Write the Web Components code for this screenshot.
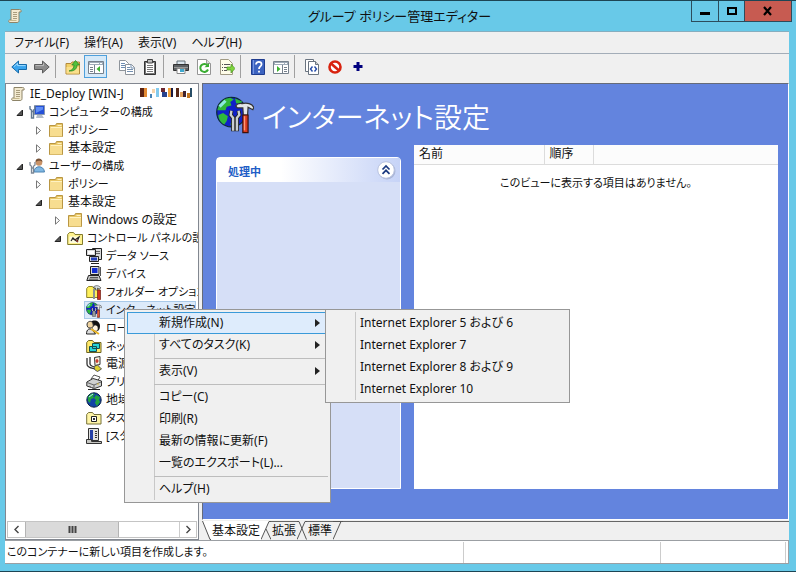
<!DOCTYPE html>
<html lang="ja">
<head>
<meta charset="utf-8">
<title>グループ ポリシー管理エディター</title>
<style>
html, body { margin: 0; height: 100%; }
body {
  font: 12px/18px "Noto Sans", "Noto Sans CJK JP", sans-serif;
  font-feature-settings: "palt";
  color: #111; overflow: hidden; background: #68c9e8;
}
</style>
</head>
<body>
<app-window></app-window>
<script>
const icons = {
scroll: `<path d="M4 1.5h8.5c1.5 0 2 1 1.500 2.500H12v8.500c0 1.500-.8 2-2 2H3c-1.500 0-2-2-.5-2.500H4z" fill="#f3ead0" stroke="#8d8468"/><path d="M6 4.500h4M6 6.500h4M6 8.500h4M6 10.500h4" stroke="#a99d7d"/><path d="M3 12.500h6.500" stroke="#c5b88d"/>`,
back: `<path d="M.8 8 7.500 2v3.500h8v5h-8V14z" fill="#3aa5ee" stroke="#176aa8"/><path d="M3 7.600 6.600 4.400v2.200h8" stroke="#9fdcff" fill="none"/>`,
forward: `<path d="M15.200 8 8.500 2v3.500h-8v5h8V14z" fill="#8b8b8b" stroke="#5c5c5c"/><path d="M1.500 6.600h8V4.300" stroke="#bbb" fill="none"/>`,
up: `<path d="M1 4.500h5l1-1.500h7.500v12H1z" fill="#f2d067" stroke="#b3893a"/><path d="M1.500 8h12.500v6.500H1.500z" fill="#f9df8b"/><path d="M4 12c3.500-1 5-3 5-6H6.800L10.500 1.500 14.500 6H12c0 4-3 6.500-8 6z" fill="#53c13c" stroke="#23811d" stroke-width=".7"/>`,
pane: `<path d="M.5 2.500h15v12H.5z" fill="#fff" stroke="#76818d"/><path d="M1 3h14v3H1z" fill="#9eabb8"/><path d="M2 4.500h9M12 4.500h2" stroke="#fff"/><path d="M6.500 6v8M2 8.500h3M2 10.500h3M2 12.500h3" stroke="#75808c"/><path d="M12 7v6L8.500 10z" fill="#3bb32e"/>`,
pane2: `<path d="M.5 2.500h15v12H.5z" fill="#fff" stroke="#76818d"/><path d="M1 3h14v3H1z" fill="#9eabb8"/><path d="M2 4.500h9M12 4.500h2" stroke="#fff"/><path d="M9.500 6v8M11 8.500h3M11 10.500h3M11 12.500h3" stroke="#75808c"/><path d="M4 7v6l3.500-3z" fill="#3bb32e"/>`,
copy: `<path d="M.5 1.500h6l3 3v7h-9z" fill="#fff" stroke="#8e949b"/><path d="M2 4.500h4M2 6.500h5M2 8.500h4" stroke="#6d8db3"/><path d="M6.500 5.500h6l3 3v7h-9z" fill="#fff" stroke="#8e949b"/><path d="M12 5.500v3.500h3.500M8 8.500h3M8 10.500h6M8 12.500h6" fill="none" stroke="#7590b0"/>`,
clip: `<path d="M2.500 2.500h11v13h-11z" fill="#777" stroke="#333"/><path d="M4 4h8v10H4z" fill="#fff"/><path d="M5.500.5h5V4h-5z" fill="#bbb" stroke="#444"/><path d="M5 6.500h6M5 8.500h6M5 10.500h6M5 12.500h6" stroke="#777"/>`,
print: `<path d="M4 2h8v4H4z" fill="#dbe6ee" stroke="#657079"/><path d="M.5 5.500h15v6H.5z" fill="#5d6164" stroke="#333"/><path d="M1 8.500h14" stroke="#999"/><path d="M4 9.500h8v5H4z" fill="#fff" stroke="#888"/><path d="M7 10h4v3H7z" fill="#3fa9cf"/>`,
refresh: `<path d="M1.500.5h9l4 4v11h-13z" fill="#fff" stroke="#959595"/><path d="M10.500.5v4h4" fill="#ddd" stroke="#999"/><path d="M11.500 6.500A4 4 0 1 0 12 10.500" fill="none" stroke="#3aad32" stroke-width="2"/><path d="M8.500 8.200 13 8V4z" fill="#3aad32"/>`,
exportlist: `<path d="M1.500.5h8l4 4v11h-12z" fill="#fffde9" stroke="#a09a83"/><path d="M3 5.500h1M3 8.500h1M3 11.500h1M5 5.500h6M5 8.500h3M5 11.500h3" stroke="#555"/><path d="M8 8h4V5l4 4.500-4 4.500v-3H8z" fill="#7ed43c" stroke="#4a9322" stroke-width=".7"/>`,
help: `<path d="M1.500.5h13v15h-13z" fill="#3c63c0" stroke="#1f3c8e"/><path d="M3.500 1v14" stroke="#7796e2"/><path d="M6 5.500C6 2 12 2 11.500 5.500 11.300 7.500 9 7.500 9 10M9 11.800v1.800" fill="none" stroke="#fff" stroke-width="1.800"/>`,
code: `<path d="M1.500.5h8v12h-8z" fill="#fff" stroke="#6a7480"/><path d="M4.500 2.500h7l3 3v10h-10z" fill="#fff" stroke="#6a7480"/><path d="M11.500 2.500v3h3" fill="#ccc" stroke="#6a7480"/><path d="m8.500 7.500-2 2.500 2 2.500M10.500 7.500l2 2.500-2 2.500" fill="none" stroke="#234aa8" stroke-width="1.400"/>`,
stop: `<circle cx="8" cy="8" r="5.500" fill="#fff" stroke="#d8230f" stroke-width="2.600"/><path d="m4 4.500 8 7" stroke="#d8230f" stroke-width="2.600"/>`,
plus: `<path d="M8 3v9M3.500 7.500h9" stroke="#00007e" stroke-width="3"/>`,
folder: `<path d="M1.500 3.500h6l1-2h6v13h-13z" fill="#e9c766" stroke="#b99643"/><path d="M2 5h12v9.500H2z" fill="#f7dd90"/><path d="M3 5.500h11M9.500 3.500h4" stroke="#fff2c2"/>`,
computer: `<path d="M5.500 1.500h10v9h-10z" fill="#2450d8" stroke="#8796b0"/><path d="M7 3h7v2.500L7 9z" fill="#5f8df4"/><path d="M8 11h5l2 3H7z" fill="#b2bcc9"/><path d="M1 2v3l1.500 1.200V14h2V6.200L6 5V2M2 7.500h3" fill="none" stroke="#64798f" stroke-width="1.400"/>`,
user: `<circle cx="10" cy="4.500" r="3.300" fill="#c89267"/><path d="M6.500 4c0-5 7-4 7 0-2-2-4-1.500-7 0z" fill="#755137"/><path d="M5 14c0-7 10-7 10.500 0z" fill="#80b8e3" stroke="#4d84b3"/><path d="M1 4v3l1.500 1.200V15h2V8.200L6 7V4M2 10h3" fill="none" stroke="#7c8896" stroke-width="1.300"/>`,
ctrl: `<path d="M.7 4.500 2.500 2.500h4l1.500 2h7.500v10H.7z" fill="#fff28e" stroke="#837b2b"/><path d="M2.500 6.500h10.500v6.500H2.500z" fill="#fffce0"/><path d="m4 11 2-3 2 2 4-3-2 5M5 8l6 4" fill="none" stroke="#222" stroke-width="1.200"/><path d="M9 9.500 11 12" stroke="#bb2a23"/>`,
data: `<path d="M6.500.5h9v11h-9z" fill="#d9d9d9" stroke="#222"/><path d="M8 3.500h6M8 5.500h6" stroke="#666"/><path d="M.5 1.500h9v6h-9z" fill="#dadada" stroke="#222"/><path d="M2 3h6v3H2z" fill="#fff"/><path d="M3.500 8.500h9v5h-9z" fill="#ddd" stroke="#222"/><path d="M5 9.500h6v3H5z" fill="#243fba"/><path d="M5 15.500h8" stroke="#222"/>`,
device: `<path d="M4.500.5h8.500v8H4.500z" fill="#ddd" stroke="#222"/><path d="M6 2h5.500v5H6z" fill="#112bd0"/><path d="M2.500 9.500H13l2 5H.8z" fill="#c7c7c7" stroke="#222"/><path d="M4 11.500h8M3 13.200h9" stroke="#555"/><path d="M14.500 1v9" stroke="#555"/>`,
folderopt: `<path d="M.7 4.500 2.500 2.500h4l1.500 2h5v9H.7z" fill="#fff05a" stroke="#8d822a"/><path d="M7 3.500c3-3 6-2 8 .5l-2 1-1.500-1V6H9.500V4z" fill="#d8dddf" stroke="#3f4547" stroke-width=".7"/><path d="M11.500 6h3v9.500h-3z" fill="#cf2f1f" stroke="#701d14" stroke-width=".7"/><path d="M8 5v10" stroke="#8b9195" stroke-width="2"/>`,
globe: `<circle cx="8" cy="8" r="7.200" fill="#1243a6" stroke="#092045"/><path d="M2 5c2-4 5-4 7-3l-2 2 1 2-3 1-1 4-2-2zM10 3l4 2-1 3 1 2-3 4-2-3 1-3-2-2z" fill="#22a43f"/><path d="m3 5 4-3" stroke="#b6f0ff"/>`,
globetools: `<circle cx="6.500" cy="6.800" r="6.200" fill="#1020c8" stroke="#0b2a35" stroke-width=".5"/><path d="M.6 6C1.200 2.500 3.500 1 6 .7L7.500 1.500 6 2.500 6.500 4 4.500 4.500 4 6 2 6zM1 8l2-.8 2 1.300-.5 2L3.500 12C2 11.200 1 9.700 1 8zM8 1l3 1.300-.8 1.200L8.500 3zM7 10l1.500 1-1 1.800L6 12z" fill="#2fb83a"/><path d="M1.500 4.500 4 2" stroke="#8de8e0" stroke-width="1.300"/><path d="M6.500 6.200 6.200 8l1 1.200v5.600M9.500 6.200 9.800 8l-1 1.200v5.600" fill="none" stroke="#222" stroke-width="1.700"/><path d="M6.500 6.200 6.200 8l1 1.200v5.400M9.500 6.200 9.800 8l-1 1.200v5.400" fill="none" stroke="#c9cdd0"/><path d="M8.300 4.200c.6-1 1.700-1.200 2.700-1 2-.5 4.200 0 4.900 1.600l-.4 1-2-1.100-.2 3.300h-1.800L11.300 5H9z" fill="#e2e6e8" stroke="#333" stroke-width=".5"/><path d="M11.300 8h2.200v7.400h-2.200z" fill="#d93a1f" stroke="#3e100a" stroke-width=".5"/><path d="M12 8.500v6" stroke="#ff9a78" stroke-width=".6"/>`,
users: `<path d="M5 2c3-3 9-1 9 4 0 4-2 6-5 5L6 8z" fill="#111"/><path d="M9 5c3 0 4 4 2 6-3 1-5-2-5-4z" fill="#fff4df" stroke="#333" stroke-width=".6"/><path d="M1 4c1-4 6-3 6 0 1 3-1 4-3 4S1 7 1 4z" fill="#efd3a0" stroke="#333"/><path d="M.5 14c0-5 3-6 6-4l3 4z" fill="#dedede" stroke="#222"/><path d="m5 9 8 5" stroke="#e8b323" stroke-width="2"/>`,
network: `<path d="M.7 4.500 2.500 2.500h4l1.500 2h7v10H.7z" fill="#ffe96a" stroke="#6e6523"/><path d="M6.500 5.500h7v5h-7zM3.500 8.500h7v5h-7z" fill="#27d4d7" stroke="#164c52"/>`,
power: `<path d="M8.500 1.500 14 .5v8l-5 1z" fill="#f5f0df" stroke="#333"/><path d="M11 3v4M9.500 5h3" stroke="#c72c20" stroke-width="1.300"/><path d="M1 2v6c0 4 5 4 8 5M4 1v7c0 2 4 3 6 3" fill="none" stroke="#333" stroke-width="1.300"/><path d="M8 10.500 11.500 9l4 4-4 2.500-3-2z" fill="#ddd22f" stroke="#555"/>`,
printer: `<path d="m5 5 3-4 6 2-3 5z" fill="#fff" stroke="#555"/><path d="M.8 8 7 4.500 15.500 7v5l-7 2.500L.8 12z" fill="#cfd1d1" stroke="#333"/><path d="m1 8.500 7 2.500 7-3M8 11v3.500M3 12l5 3" fill="none" stroke="#666"/><path d="M11 10h2" stroke="#dfbe39"/><path d="M2 15.500h12" stroke="#222"/>`,
task: `<path d="M.7 4.500 2.500 2.500h4l1.500 2h7v9.500H.7z" fill="#fff5a6" stroke="#777139"/><path d="M5.500 6.500h5v5h-5z" fill="#fff" stroke="#222"/><path d="M7 8h2v2H7z" fill="#333"/>`,
start: `<path d="M2.500.5h10v12h-10z" fill="#e2e2df" stroke="#333"/><path d="M4 2h3v10H4z" fill="#2540a7"/><path d="M9 3.500h2M9 5.500h2M9 7.500h2M9 9.500h2" stroke="#333"/><path d="M.5 11.500h5v2h10v2H.5z" fill="#c6c6c2" stroke="#333"/>`
};
function define(name, html, setup) {
  const template = document.createElement('template');
  template.innerHTML = `<style>*{box-sizing:border-box}button{font:inherit;font-feature-settings:inherit;color:inherit;border:0;background:none;padding:0;text-align:left}</style>${html}`;
  customElements.define(name, class extends HTMLElement {
    connectedCallback() {
      if (this.shadowRoot) return;
      const content = template.content.cloneNode(true);
      if (setup) setup(this, content);
      this.attachShadow({ mode: 'open' }).append(content);
    }
  });
}

define('ui-icon', `<style>:host{display:block;flex:none;width:16px;height:16px}svg{display:block;width:100%;height:100%}</style><svg viewBox="0 0 16 16" aria-hidden="true"></svg>`,
  (el, root) => { root.querySelector('svg').innerHTML = icons[el.getAttribute('name')]; });

define('title-bar', `<style>
:host{display:grid;grid-template-columns:1fr auto 1fr;height:30px;padding:0 4px 0 7px}
ui-icon{margin-top:7px}
h1{margin:0;font-size:13px;font-weight:400;line-height:30px;white-space:nowrap}
.b{justify-self:end;display:flex;height:21px;border:1px solid #2c4c5c;border-top:0}
button{width:27px;display:grid;place-items:center;border-right:1px solid #2c4c5c}
button+button{width:26px}
button:last-child{width:46px;background:#c75b51;border:0}svg{display:block}
</style><ui-icon name="scroll"></ui-icon><h1><slot></slot></h1>
<div class="b"><button aria-label="最小化"><svg width="12" height="10"><path d="M1 6h10v3H1z"/></svg></button>
<button aria-label="最大化"><svg width="12" height="10"><path d="M2 2h8v6H2z" fill="none" stroke="#000" stroke-width="2"/></svg></button>
<button aria-label="閉じる"><svg width="12" height="10"><path d="m2 1 7 8M9 1 2 9" stroke="#000" stroke-width="2.200"/></svg></button></div>`);

define('menu-bar', `<style>:host{display:flex;gap:15px;height:23px;padding:0 9px;background:#f0f0f0;border-top:1px solid #86aebf;border-bottom:1px solid #a3adb8}</style><slot></slot>`);
define('menu-title', `<style>:host{display:block}button{line-height:21px;white-space:nowrap}</style><button><slot></slot></button>`);

define('tool-bar', `<style>:host{display:flex;height:29px;padding:1px 2px;background:#f0f0f0}</style><slot></slot>`);
define('tool-button', `<style>:host{display:block}button{width:23px;height:23px;display:grid;place-items:center}:host([pressed]) button{background:#d5e9f8;border:1px solid #4ea0dc}</style><button><ui-icon></ui-icon></button>`,
  (el, root) => { root.querySelector('ui-icon').setAttribute('name', el.getAttribute('icon')); root.querySelector('button').setAttribute('aria-label', el.getAttribute('label')); });
define('tool-sep', `<style>:host{display:block;width:8px;height:23px;padding-left:2px}i{display:block;height:100%;border-left:1px solid #a0a0a0}:host([blank]) i{border:0}</style><i></i>`);

define('tree-item', `<style>
:host{display:flex;height:18px;white-space:nowrap;width:100%}
:host([compact]){font-size:11px}
.toggle{width:15px;display:grid;place-items:center;flex:none}svg{display:block}
.item{display:flex;align-items:center;gap:4px;padding:0 2px;height:18px;flex:1;min-width:0;overflow:hidden}
:host([selected]) .item{background:#dceafa;border:1px solid #a9c9e8;padding:0 1px;margin-right:2px}
span{display:flex;line-height:18px}
</style><button class="toggle" aria-label="展開"><svg width="9" height="9"></svg></button><div class="item"><ui-icon></ui-icon><span><slot></slot></span></div>`,
  (el, root) => {
    const level = +el.getAttribute('level'), state = el.getAttribute('state'), toggle = root.querySelector('.toggle');
    root.querySelector('ui-icon').setAttribute('name', el.getAttribute('icon'));
    el.style.paddingLeft = (level ? level * 19 - 13 : 2) + 'px';
    if (!level) toggle.remove();
    if (state === 'open') toggle.firstChild.innerHTML = '<path d="M7.500 2v5.500H2z" fill="#555" stroke="#222"/>';
    else if (state === 'closed') toggle.firstChild.innerHTML = '<path d="M2.500 .8v7.400L6.500 4.500z" fill="#fff" stroke="#777"/>';
    else toggle.disabled = true;
  });

define('redacted-name', `<style>:host{display:block;padding:3px 0 0 16px}svg{display:block}</style><svg width="52" height="11" aria-hidden="true">
<path d="M0 0h4v9H0z" fill="#5b2413"/><path d="M4 0h3v9H4z" fill="#e38a32"/><path d="M10 6h2v4h-2z" fill="#4582b4"/><path d="M12 1h3v4h-3z" fill="#f5d5ae"/><path d="M16 0h3v9h-3z" fill="#82caed"/><path d="M21 0h4v4h-4z" fill="#6a2730"/><path d="M22 4h5v5h-5z" fill="#27428d"/><path d="M28 0h3v9h-3z" fill="#f1a13a"/><path d="M31 0h2v9h-2z" fill="#1b1b42"/><path d="M36 0h3v9h-3z" fill="#572817"/><path d="M40 4h3v5h-3z" fill="#e6a35f"/><path d="M43 3h3v6h-3z" fill="#3f2330"/><path d="M47 5h3v5h-3z" fill="#c5761e"/><path d="M50 0h2v9h-2z" fill="#274d66"/></svg>`);

define('scroll-bar', `<style>:host{display:grid;grid-template-columns:17px 94px 1fr 17px;height:17px;margin:0 1px 1px;border:1px solid #c4c4c4;background:#fff}
button{display:grid;place-items:center;width:100%}.thumb{background:#dadada;border:1px solid #b4b4b4;border-width:0 1px}button:last-child{border-left:1px solid #ccc}svg{display:block}</style>
<button aria-label="左へ"><svg width="7" height="9"><path d="M5.500 1 2 4.500 5.500 8" fill="none" stroke="#444" stroke-width="1.400"/></svg></button><button class="thumb" aria-label="スクロール"><svg width="9" height="7"><path d="M1.500 0v7M4.500 0v7M7.500 0v7" stroke="#444" stroke-width="2"/></svg></button><i></i><button aria-label="右へ"><svg width="7" height="9"><path d="M1.500 1 5 4.500 1.500 8" fill="none" stroke="#444" stroke-width="1.400"/></svg></button>`);

define('tree-pane', `<style>:host{display:flex;flex-direction:column;background:#fff;border:1px solid #828790;overflow:hidden}.rows{flex:1;padding-top:1px;min-height:0;overflow:hidden}</style><div class="rows"><slot></slot></div><scroll-bar></scroll-bar>`);

define('task-pane', `<style>:host{display:flex;flex-direction:column;border:1px solid #fff;border-radius:4px 4px 0 0;background:#d6dff7}
header{display:flex;align-items:center;justify-content:space-between;height:24px;padding:0 4px 0 11px;background:linear-gradient(90deg,#fff 35%,#c6d3f7)}
h2{margin:0;font-size:11px;font-weight:700;color:#215dc6;padding-top:4px}button,svg{display:block}</style>
<header><h2><slot></slot></h2><button aria-label="折りたたむ"><svg width="19" height="19"><circle cx="10" cy="10" r="8.500" fill="#a9b5d6"/><circle cx="9" cy="9" r="8.300" fill="#fff" stroke="#b8c2df"/><path d="m5.500 8.500 3.500-3.500 3.500 3.500M5.500 12.800 9 9.300l3.500 3.500" fill="none" stroke="#1b3a80" stroke-width="1.700"/></svg></button></header>`);

define('item-list', `<style>:host{display:block;background:#fff}table{width:100%;border-collapse:collapse;table-layout:fixed}
th{height:19px;padding:0 5px;font-weight:400;text-align:left;line-height:18px;background:#fcfcfc;border-bottom:1px solid #dcdcdc;border-right:1px solid #dcdcdc}
th:last-child{border-right:0}td{padding:9px 0;text-align:center;font-size:11px}</style>
<table><colgroup><col style="width:130px"><col style="width:49px"><col></colgroup><thead><tr><th>名前</th><th>順序</th><th aria-label="余白"></th></tr></thead><tbody><tr><td colspan="3"><slot></slot></td></tr></tbody></table>`);

define('result-pane', `<style>:host{display:flex;flex-direction:column;background:#6384de;border:1px solid #666b78;border-right-color:#fff;border-bottom-color:#fff;padding:0 10px 30px 13px;min-width:0}
header{display:flex;align-items:center;gap:8px;height:61px}h1{margin:0;font-size:28px;font-weight:350;line-height:40px;color:#fff;white-space:nowrap;padding-top:4px}
ui-icon{width:38px;height:38px}.cols{flex:1;display:grid;grid-template-columns:185px 1fr;gap:13px}task-pane{margin-top:12px}</style>
<header><ui-icon name="globetools"></ui-icon><h1><slot name="title"></slot></h1></header><div class="cols"><task-pane>処理中</task-pane><item-list><slot></slot></item-list></div>`);

define('view-tabs', `<style>:host{display:flex;height:20px;padding-top:1px}svg{display:block;flex:none}
button{border-top:1px solid #666;line-height:18px;padding:0 1px;height:19px;white-space:nowrap}button.on{background:#fff;border-color:#fff}.rest{flex:1;border-top:1px solid #666}
path{fill:none;stroke:#555}.f{fill:#fff;stroke:none}</style>
<svg width="9" height="19"><path class="f" d="M0 0h9v19z"/><path d="M.5 0 8 18.500h1"/></svg><button class="on">基本設定</button>
<svg width="10" height="19"><path class="f" d="M0 0h8L0 19z"/><path d="M0 18.500 8 .5h2M5 8l5 10.500"/></svg><button>拡張</button>
<svg width="10" height="19"><path d="M0 18.500 8 .5h2M0 .5h2l7.500 18"/></svg><button>標準</button>
<svg width="10" height="19"><path d="M0 18.500 8 .5h2M0 .5h8"/></svg><div class="rest"></div>`);

define('status-bar', `<style>:host{display:grid;grid-template-columns:460fr 197fr 125fr 2px;height:24px;box-sizing:border-box;background:#fff;border:1px solid #9b9fa3;border-left:0;font-size:11px}
div{border-right:1px solid #ccc;margin-top:1px;padding-left:2px;line-height:20px;white-space:nowrap}div:last-child{border:0}</style><div><slot></slot></div><div></div><div></div><div></div>`);

define('popup-menu', `<style>:host{display:block;box-sizing:border-box;position:absolute;background:#f0f0f0;border:1px solid #979797;padding:2px;color:#111}
nav{background:linear-gradient(#c8c8c8,#c8c8c8) 27px 0/1px 100% no-repeat}</style><nav><slot></slot></nav>`);
define('menu-entry', `<style>:host{display:block}button{display:flex;align-items:center;width:100%;height:22px;padding:0 6px 0 31px;border:1px solid transparent;white-space:nowrap}
span{flex:1}svg{display:none}:host([more]) svg{display:block}:host([active]) button{background:#deecfc;border-color:#3a9ad9}</style><button><span><slot></slot></span><svg width="6" height="8"><path d="M0 0v8l5-4z" fill="#222"/></svg></button>`);
define('menu-rule', `<style>:host{display:block;height:4px;box-sizing:border-box;padding:2px 0 0 27px}i{display:block;border-top:1px solid #bdbdbd}</style><i></i>`);

define('app-window', `<style>
:host{display:flex;flex-direction:column;box-sizing:border-box;height:100vh;background:#68c9e8;border:solid #1d4554;border-width:1px 0;position:relative}
.frame{flex:1;display:flex;flex-direction:column;margin:0 7px 7px 5px;min-height:0;background:#f0f0f0}
.body{flex:1;display:grid;grid-template-columns:194px 1fr;gap:3px;min-height:0}
.right{display:flex;flex-direction:column;min-width:0}result-pane{flex:1}
.context{left:124px;top:308px;width:207px}.sub{left:325px;top:308px;width:245px}
</style>
<title-bar>グループ ポリシー管理エディター</title-bar>
<div class="frame">
<menu-bar><menu-title>ファイル(F)</menu-title><menu-title>操作(A)</menu-title><menu-title>表示(V)</menu-title><menu-title>ヘルプ(H)</menu-title></menu-bar>
<tool-bar>
<tool-button icon="back" label="戻る"></tool-button><tool-button icon="forward" label="進む"></tool-button><tool-sep></tool-sep>
<tool-button icon="up" label="上へ"></tool-button><tool-button icon="pane" label="ツリーの表示" pressed></tool-button><tool-sep blank></tool-sep>
<tool-button icon="copy" label="コピー"></tool-button><tool-button icon="clip" label="貼り付け"></tool-button><tool-sep></tool-sep>
<tool-button icon="print" label="印刷"></tool-button><tool-button icon="refresh" label="更新"></tool-button><tool-button icon="exportlist" label="エクスポート"></tool-button><tool-sep></tool-sep>
<tool-button icon="help" label="ヘルプ"></tool-button><tool-button icon="pane2" label="操作ウィンドウ"></tool-button><tool-sep></tool-sep>
<tool-button icon="code" label="XML の表示"></tool-button><tool-button icon="stop" label="無効"></tool-button><tool-button icon="plus" label="追加"></tool-button>
</tool-bar>
<div class="body">
<tree-pane>
<tree-item level="0" icon="scroll">IE_Deploy [WIN-J<redacted-name></redacted-name></tree-item>
<tree-item level="1" icon="computer" state="open" compact>コンピューターの構成</tree-item>
<tree-item level="2" icon="folder" state="closed" compact>ポリシー</tree-item>
<tree-item level="2" icon="folder" state="closed">基本設定</tree-item>
<tree-item level="1" icon="user" state="open" compact>ユーザーの構成</tree-item>
<tree-item level="2" icon="folder" state="closed" compact>ポリシー</tree-item>
<tree-item level="2" icon="folder" state="open">基本設定</tree-item>
<tree-item level="3" icon="folder" state="closed">Windows の設定</tree-item>
<tree-item level="3" icon="ctrl" state="open" compact>コントロール パネルの設</tree-item>
<tree-item level="4" icon="data" compact>データ ソース</tree-item>
<tree-item level="4" icon="device" compact>デバイス</tree-item>
<tree-item level="4" icon="folderopt" compact>フォルダー オプション</tree-item>
<tree-item level="4" icon="globetools" selected compact>インターネット設定</tree-item>
<tree-item level="4" icon="users" compact>ロー</tree-item>
<tree-item level="4" icon="network" compact>ネッ</tree-item>
<tree-item level="4" icon="power">電源</tree-item>
<tree-item level="4" icon="printer" compact>プリ</tree-item>
<tree-item level="4" icon="globe">地域</tree-item>
<tree-item level="4" icon="task" compact>タス</tree-item>
<tree-item level="4" icon="start" compact>[スタ</tree-item>
</tree-pane>
<div class="right"><result-pane><span slot="title">インターネット設定</span>このビューに表示する項目はありません。</result-pane><view-tabs></view-tabs></div>
</div>
<status-bar>このコンテナーに新しい項目を作成します。</status-bar>
</div>
<popup-menu class="context">
<menu-entry active more>新規作成(N)</menu-entry><menu-entry more>すべてのタスク(K)</menu-entry><menu-rule></menu-rule>
<menu-entry more>表示(V)</menu-entry><menu-rule></menu-rule>
<menu-entry>コピー(C)</menu-entry><menu-entry>印刷(R)</menu-entry><menu-entry>最新の情報に更新(F)</menu-entry><menu-entry>一覧のエクスポート(L)...</menu-entry><menu-rule></menu-rule>
<menu-entry>ヘルプ(H)</menu-entry>
</popup-menu>
<popup-menu class="sub">
<menu-entry>Internet Explorer 5 および 6</menu-entry><menu-entry>Internet Explorer 7</menu-entry><menu-entry>Internet Explorer 8 および 9</menu-entry><menu-entry>Internet Explorer 10</menu-entry>
</popup-menu>`);
</script>
</body>
</html>
